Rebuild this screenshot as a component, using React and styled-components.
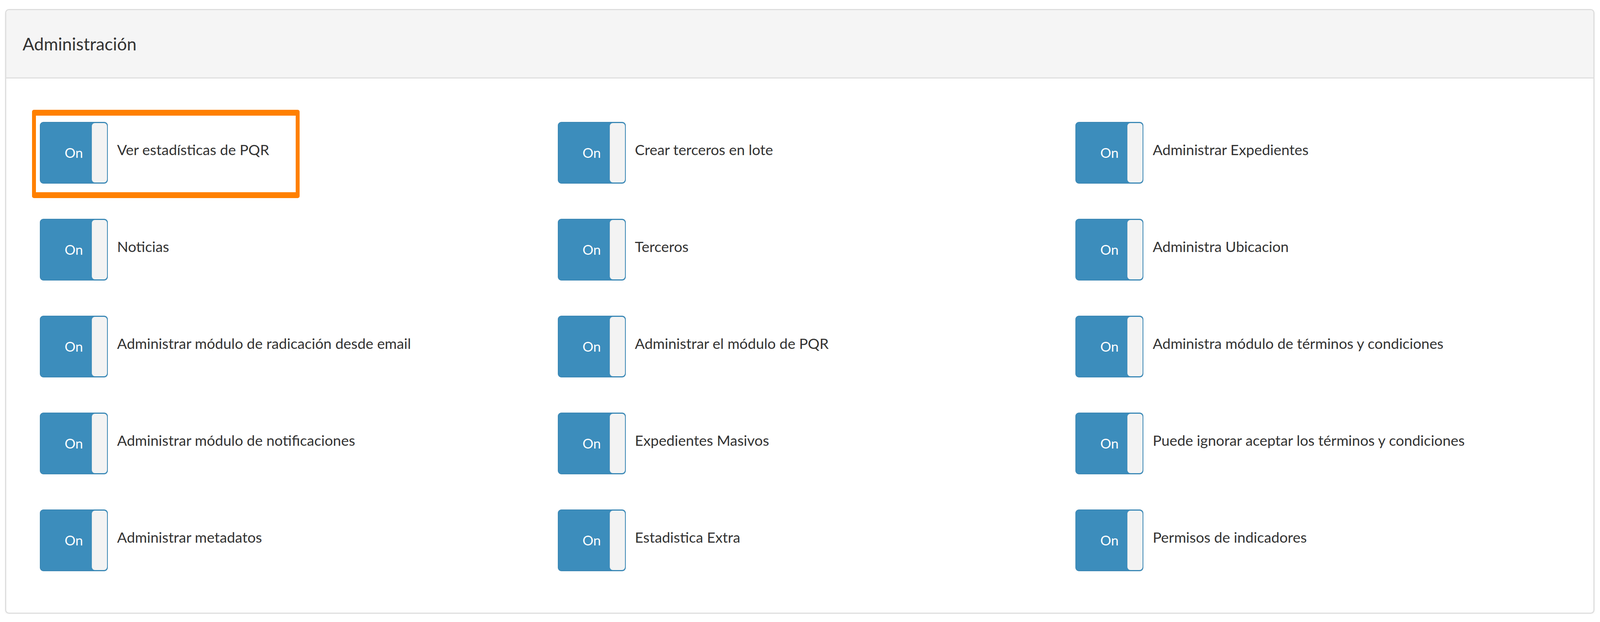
import React from 'react';
import styled, { createGlobalStyle } from 'styled-components';

// sizes measured on the 6362 x 1592 reference, kept proportional to the window
const x = (n) => `${((n / 6362) * 100).toFixed(4)}vw`;
const y = (n) => `${((n / 1592) * 100).toFixed(4)}vh`;

const GlobalStyle = createGlobalStyle`
  html, body {
    margin: 0;
    padding: 0;
    background: #fff;
  }
  body {
    font-family: Lato, "Open Sans", "Liberation Sans", sans-serif;
    color: #333;
  }
`;

const Page = styled.div`
  padding: ${y(23)} ${x(22)} 0 ${x(20)};
`;

const Panel = styled.section`
  border: 3px solid #dedede;
  border-radius: 10px;
  background: #fff;
  box-shadow: 0 3px 5px rgba(0, 0, 0, 0.04);
  overflow: hidden;
`;

const PanelHeading = styled.header`
  display: flex;
  align-items: center;
  height: ${y(172)};
  padding-left: ${x(65)};
  background: #f5f5f5;
  border-bottom: 3px solid #e0e0e0;
`;

const PanelTitle = styled.h3`
  margin: 0;
  font-size: ${x(69)};
  font-weight: 400;
  color: #333;
`;

const PanelBody = styled.div`
  display: grid;
  grid-template-columns: repeat(3, minmax(0, 1fr));
  row-gap: ${y(90)};
  padding: ${y(111)} 0 ${y(106)} ${x(134)};
`;

const Item = styled.label`
  position: relative;
  display: flex;
  align-items: center;
`;

const Highlight = styled.span`
  position: absolute;
  left: ${x(-31)};
  top: ${y(-31)};
  width: ${x(1063)};
  height: ${y(226)};
  box-sizing: border-box;
  border-style: solid;
  border-color: #ff8000;
  border-width: ${y(16)} ${x(16)};
  border-radius: 5px;
  pointer-events: none;
`;

const Toggle = styled.span`
  position: relative;
  flex: none;
  display: flex;
  align-items: center;
  justify-content: center;
  box-sizing: border-box;
  width: ${x(270)};
  height: ${y(158)};
  background: #3c8dbc;
  border: 2px solid #3a86b3;
  border-radius: 9px;
  color: #fff;
  font-size: ${x(54)};
`;

const Handle = styled.span`
  position: absolute;
  top: 1px;
  bottom: 1px;
  right: 0;
  width: ${x(59)};
  background: #f3f3f3;
  border-left: 1px solid #e4e4e4;
  border-radius: 8px;
`;

const LabelText = styled.span`
  margin-left: ${x(37)};
  padding-bottom: ${y(16)};
  font-size: ${x(58)};
  color: #333;
  white-space: nowrap;
`;

const permisos = [
  'Ver estadísticas de PQR',
  'Crear terceros en lote',
  'Administrar Expedientes',
  'Noticias',
  'Terceros',
  'Administra Ubicacion',
  'Administrar módulo de radicación desde email',
  'Administrar el módulo de PQR',
  'Administra módulo de términos y condiciones',
  'Administrar módulo de notificaciones',
  'Expedientes Masivos',
  'Puede ignorar aceptar los términos y condiciones',
  'Administrar metadatos',
  'Estadistica Extra',
  'Permisos de indicadores',
];

const App = () => {
  return (
    <Page>
      <GlobalStyle />
      <Panel>
        <PanelHeading>
          <PanelTitle>Administración</PanelTitle>
        </PanelHeading>
        <PanelBody>
          {permisos.map((nombre, i) => (
            <Item key={nombre}>
              {i === 0 && <Highlight />}
              <Toggle>
                On
                <Handle />
              </Toggle>
              <LabelText>{nombre}</LabelText>
            </Item>
          ))}
        </PanelBody>
      </Panel>
    </Page>
  );
};

export default App;
